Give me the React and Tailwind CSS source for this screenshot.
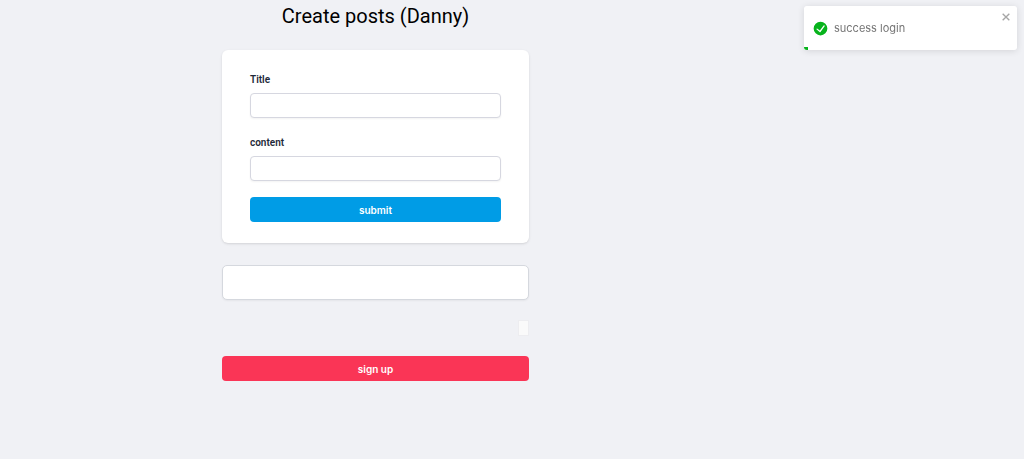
import React from "react";

const inputClass =
  "block h-[25px] w-full rounded border border-[#d6d7e0] bg-white px-2 text-[10px] shadow-xs outline-none focus:border-sky-500";

function Field({ id, label }) {
  return (
    <div className="flex flex-col gap-1">
      <label htmlFor={id} className="font-['Roboto',sans-serif] text-[10px] leading-[18px] font-semibold text-gray-800">
        {label}
      </label>
      <input id={id} name={id} type="text" className={inputClass} />
    </div>
  );
}

function Toast({ message }) {
  return (
    <div
      role="alert"
      className="fixed top-1.5 right-[7px] flex h-11 w-[213px] items-center gap-1.5 overflow-hidden rounded-[3px] bg-white pl-[9px] shadow-[0_1px_7px_rgba(0,0,0,0.12)]"
    >
      <svg viewBox="0 0 24 24" className="size-[15px] shrink-0" aria-hidden="true">
        <path
          fill="#07b31c"
          d="M12 1a11 11 0 1011 11A11 11 0 0012 1zm6.6 7.5l-6.6 8.9a1.011 1.011 0 01-1.43.188l-4.7-3.808a1 1 0 111.25-1.562l3.876 3.061 6-8a1 1 0 111.61 1.183z"
        />
      </svg>
      <span className="text-[11px] leading-4 text-[#757575]">{message}</span>
      <button type="button" aria-label="close" className="absolute top-1.5 right-1.5 text-[#a6a6a6]">
        <svg viewBox="0 0 12 12" className="size-[10px]" aria-hidden="true">
          <path d="M2 2l8 8M10 2l-8 8" fill="none" stroke="currentColor" strokeWidth="1.6" />
        </svg>
      </button>
      <span className="absolute bottom-0 left-0 h-[3px] w-1 bg-[#07b31c]" />
    </div>
  );
}

export default function App() {
  return (
    <div className="min-h-screen bg-[#f0f1f5] font-['Inter',sans-serif]">
      <main className="max-w-[751px]">
        <div className="mx-auto flex max-w-[307px] flex-col">
          <h1 className="pt-0.5 text-center font-['Roboto',sans-serif] text-[20px] leading-7 text-black">
            Create posts (Danny)
          </h1>

          <form
            onSubmit={(e) => e.preventDefault()}
            className="mt-5 flex flex-col gap-4 rounded-md bg-white px-7 py-[21px] shadow-sm"
          >
            <Field id="title" label="Title" />
            <Field id="content" label="content" />
            <button
              type="submit"
              className="h-[25px] w-full rounded bg-[#009ce6] text-[10px] leading-4 font-semibold text-white"
            >
              submit
            </button>
          </form>

          <div className="mt-[22px] h-[35px] rounded-[5px] border border-[#d5d8de] bg-white shadow-xs" />

          <div className="mt-5 h-4 w-[11px] self-end border border-[#ededf0] bg-[#fafafa]" />

          <button
            type="button"
            className="mt-5 h-[25px] w-full rounded bg-[#fa3556] text-[10px] leading-4 font-semibold text-white"
          >
            sign up
          </button>
        </div>
      </main>

      <Toast message="success login" />
    </div>
  );
}
